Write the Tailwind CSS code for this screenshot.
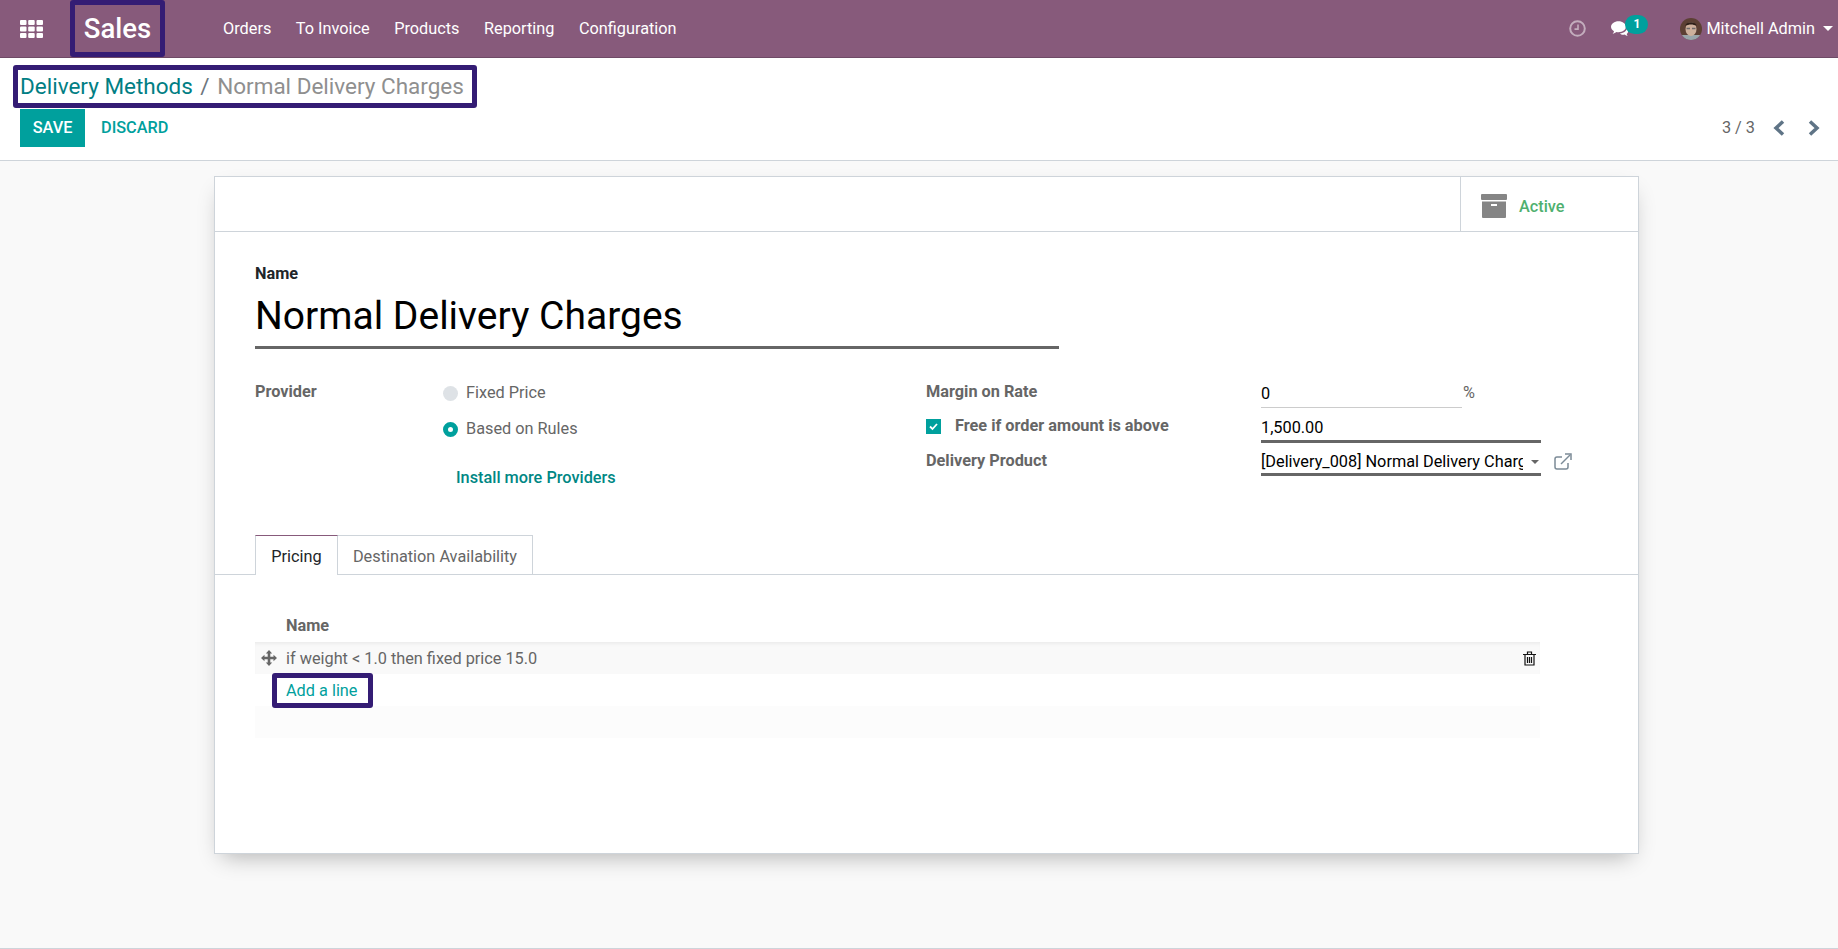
<!DOCTYPE html>
<html lang="en">
<head>
    <meta charset="UTF-8">
    <title>Delivery Methods - Sales</title>
    <script src="https://cdn.jsdelivr.net/npm/@tailwindcss/browser@4"></script>
</head>
<body class="bg-[#f9f9f9] font-['Roboto',sans-serif] text-[16.3px] text-[#666666]">
<div class="h-[949px] flex flex-col overflow-hidden">
    <!-- Navbar -->
    <header class="h-[58px] shrink-0 bg-[#875a7b] border-b border-[#6f4a66] flex items-center text-white">
        <svg class="ml-[20px] w-[23px] h-[18px] shrink-0" viewBox="0 0 23 18" fill="#fff">
            <rect x="0" y="0" width="6.5" height="5" rx="1"/><rect x="8.2" y="0" width="6.5" height="5" rx="1"/><rect x="16.5" y="0" width="6.5" height="5" rx="1"/>
            <rect x="0" y="6.5" width="6.5" height="5" rx="1"/><rect x="8.2" y="6.5" width="6.5" height="5" rx="1"/><rect x="16.5" y="6.5" width="6.5" height="5" rx="1"/>
            <rect x="0" y="13" width="6.5" height="5" rx="1"/><rect x="8.2" y="13" width="6.5" height="5" rx="1"/><rect x="16.5" y="13" width="6.5" height="5" rx="1"/>
        </svg>
        <div class="ml-[27px] w-[95px] h-[57px] border-[5px] border-[#341c74] rounded-[3px] flex items-center justify-center text-[27.5px] font-medium">Sales</div>
        <nav class="ml-[58px] pt-px flex gap-[24.5px]">
            <span>Orders</span><span>To Invoice</span><span>Products</span><span>Reporting</span><span>Configuration</span>
        </nav>
        <div class="ml-auto flex items-center">
            <svg class="w-[17px] h-[17px] opacity-50" viewBox="0 0 17 17" fill="none" stroke="#fff" stroke-width="2"><circle cx="8.5" cy="8.5" r="7.3"/><path d="M9 4.5v4.6H5.5" stroke-width="1.6"/></svg>
            <div class="relative ml-[25px] w-[37px] h-[22px]">
                <svg class="absolute left-0 top-[3px] w-[19px] h-[16px]" viewBox="0 0 19 16" fill="#fff"><path d="M7.5 0.2C3.4 0.2 0 2.700 0 5.800c0 1.800 1.100 3.400 3 4.400-.2 1-.8 1.900-1.400 2.500 1.500-.2 2.900-.9 3.900-1.700.6.1 1.300.2 2 .2 4.100 0 7.500-2.400 7.500-5.400S11.600 0.200 7.500 0.200z"/><path d="M16.200 5.200c.1.300.1.700.1 1 0 3.300-3.300 5.900-7.400 6.200.8.800 2 1.300 3.300 1.300.5 0 1-.1 1.500-.2.8.700 1.900 1.300 3.100 1.500-.5-.5-.9-1.300-1.100-2.100 1.100-.8 1.800-2 1.800-3.300 0-1.700-.9-3.200-2.300-4.400z"/></svg>
                <span class="absolute left-[14px] -top-[3px] w-[23px] h-[19px] rounded-full bg-[#00a09d] text-[12px] font-bold flex items-center justify-center">1</span>
            </div>
            <svg class="ml-[32px] w-[22px] h-[22px] rounded-full" viewBox="0 0 22 22"><rect width="22" height="22" fill="#5c4034"/><rect y="17" width="22" height="5" fill="#9aa6ab"/><ellipse cx="11" cy="11" rx="5.500" ry="7" fill="#cdb09c"/><path d="M5.500 8c0-5 11-5 11 0-3-2-8-2-11 0z" fill="#2e2019"/><path d="M6.500 10.500h3.500M12 10.500h3.500" stroke="#6e6a6a" stroke-width="1.500"/></svg>
            <span class="ml-[4px] pt-px">Mitchell Admin</span>
            <span class="ml-[8px] mr-[5px] w-0 h-0 border-x-[5px] border-x-transparent border-t-[5px] border-t-white"></span>
        </div>
    </header>

    <!-- Control panel -->
    <section class="h-[103px] shrink-0 bg-white border-b border-[#ced4da]">
        <div class="ml-[13px] mt-[7px] w-[464px] h-[43px] border-[5px] border-[#341c74] rounded-[3px] flex items-center pl-[2px] text-[22.5px] whitespace-nowrap">
            <span class="text-[#017e84]">Delivery Methods</span>
            <span class="mx-[7.5px] text-[#6c757d]">/</span>
            <span class="text-[#8f8f8f]">Normal Delivery Charges</span>
        </div>
        <div class="mt-px flex items-center pl-[20px] pr-[18px]">
            <span class="w-[65px] h-[38px] bg-[#00a09d] text-white font-medium flex items-center justify-center">SAVE</span>
            <span class="ml-[16px] text-[#00a09d] font-medium">DISCARD</span>
            <span class="ml-auto text-[#666666]">3 / 3</span>
            <svg class="ml-[18px] w-[12px] h-[16px]" viewBox="0 0 12 16" fill="none" stroke="#5f7486" stroke-width="3.500"><path d="M10 1.500 3 8l7 6.500"/></svg>
            <svg class="ml-[23px] w-[12px] h-[16px]" viewBox="0 0 12 16" fill="none" stroke="#5f7486" stroke-width="3.500"><path d="M2 1.500 9 8l-7 6.500"/></svg>
        </div>
    </section>

    <!-- Form sheet -->
    <main class="mt-[15px] ml-[214px] w-[1425px] h-[678px] shrink-0 bg-white border border-[#ced4da] shadow-[0_10px_22px_-8px_rgba(0,0,0,0.3)]">
        <div class="h-[55px] border-b border-[#ced4da] flex justify-end">
            <div class="w-[178px] border-l border-[#ced4da] flex items-center pl-[20px] pt-[4px]">
                <svg class="w-[26px] h-[24px]" viewBox="0 0 26 24" fill="#858585"><rect x="0" y="0" width="26" height="6" rx="1"/><path d="M1 7.500h24V23a1 1 0 0 1-1 1H2a1 1 0 0 1-1-1z"/><rect x="10" y="10" width="6" height="2" fill="#fff"/></svg>
                <span class="ml-[12px] mt-[2px] text-[#4fb06f] font-medium">Active</span>
            </div>
        </div>

        <div class="pl-[40px]">
            <div class="mt-[32px] h-[20px] leading-[20px] font-bold text-[#212529]">Name</div>
            <div class="w-[804px] h-[65px] border-b-[3px] border-[#666666] text-[39px] text-black leading-[64px]">Normal Delivery Charges</div>

            <div class="mt-[31px] h-[109px] flex">
                <div class="w-[671px] flex">
                    <div class="w-[187px] h-[24px] leading-[24px] font-bold">Provider</div>
                    <div class="pt-px">
                        <div class="h-[24px] flex items-center gap-[8px] pl-px">
                            <span class="w-[15px] h-[15px] rounded-full bg-[#dee2e6]"></span>
                            <span>Fixed Price</span>
                        </div>
                        <div class="mt-[12px] h-[24px] flex items-center gap-[8px] pl-px">
                            <span class="w-[15px] h-[15px] rounded-full border-[5px] border-[#00a09d] bg-white"></span>
                            <span>Based on Rules</span>
                        </div>
                        <div class="mt-[25px] h-[24px] leading-[24px] ml-[14px] font-medium text-[#008784]">Install more Providers</div>
                    </div>
                </div>
                <div>
                    <div class="h-[28px] flex">
                        <div class="w-[335px] h-[24px] leading-[24px] font-bold">Margin on Rate</div>
                        <div class="w-[201px] border-b border-[#cccccc] leading-[28px] text-black">0</div>
                        <span class="ml-[1px] h-[26px] leading-[26px]">%</span>
                    </div>
                    <div class="h-[35px] flex">
                        <div class="w-[335px] flex items-center h-[36px]">
                            <span class="w-[15px] h-[15px] bg-[#00a09d] flex items-center justify-center">
                                <svg class="w-[9px] h-[9px]" viewBox="0 0 9 9" fill="none" stroke="#fff" stroke-width="1.800"><path d="M1 4.500 3.500 7 8 2"/></svg>
                            </span>
                            <span class="ml-[14px] font-bold">Free if order amount is above</span>
                        </div>
                        <div class="w-[280px] border-b-[3px] border-[#666666] pt-[7px] leading-[26px] text-black">1,500.00</div>
                    </div>
                    <div class="h-[33px] flex">
                        <div class="w-[335px] h-[36px] leading-[36px] font-bold">Delivery Product</div>
                        <div class="w-[280px] border-b-[3px] border-[#666666] flex items-center pt-[8px] text-black">
                            <span class="w-[262px] overflow-hidden whitespace-nowrap">[Delivery_008] Normal Delivery Charges</span>
                            <span class="ml-[8px] w-0 h-0 border-x-[4px] border-x-transparent border-t-[4px] border-t-[#666666]"></span>
                        </div>
                        <svg class="ml-[13px] mt-[10px] w-[18px] h-[17px]" viewBox="0 0 18 17" fill="none" stroke="#7c8b97" stroke-width="1.500"><path d="M14 10v4a2 2 0 0 1-2 2H3a2 2 0 0 1-2-2V6a2 2 0 0 1 2-2h5"/><path d="M7 11 16 2"/><path d="M11 1h6v6" stroke-width="1.500"/></svg>
                    </div>
                </div>
            </div>
        </div>

        <!-- Tabs -->
        <div class="mt-[46px] h-[40px] border-b border-[#ced4da] flex pl-[40px]">
            <div class="w-[83px] h-[40px] bg-white border-x border-[#ced4da] border-t border-t-[#875a7b] text-[#212529] flex items-center justify-center pt-[4px]">Pricing</div>
            <div class="w-[195px] h-[39px] border-r border-t border-[#ced4da] flex items-center justify-center pt-[4px]">Destination Availability</div>
        </div>

        <div class="ml-[40px] w-[1285px]">
            <div class="mt-[41px] h-[20px] leading-[20px] pl-[31px] font-bold">Name</div>
            <div class="mt-[6px] h-[32px] bg-[#f9f9f9] shadow-[inset_0_4px_4px_-3px_rgba(0,0,0,0.08)] flex items-center">
                <svg class="ml-[6px] w-[16px] h-[16px]" viewBox="0 0 16 16" fill="#666666"><path d="M8 0 4.800 3.500H6.700V6.700H3.500V4.800L0 8l3.500 3.200V9.300h3.200v3.200H4.800L8 16l3.200-3.500H9.300V9.300h3.200v1.900L16 8l-3.500-3.200v1.900H9.300V3.500h1.900z"/></svg>
                <span class="ml-[9px] pt-[2px]">if weight &lt; 1.0 then fixed price 15.0</span>
                <svg class="ml-auto mr-[4px] w-[13px] h-[15px]" viewBox="0 0 13 15" fill="none" stroke="#111" stroke-width="1.200"><path d="M0 3.500h13M2 3.500V14h9V3.500M4.500 3.500V1h4v2.500M4.500 6v6M6.500 6v6M8.500 6v6"/></svg>
            </div>
            <div class="h-[33px]">
                <div class="relative ml-[17px] -mt-px w-[101px] h-[35px] bg-white border-[5px] border-[#341c74] rounded-[3px] flex items-center pl-[9px] pt-[2px] text-[#00a09d]">Add a line</div>
            </div>
            <div class="h-[32px] bg-[#fcfcfc]"></div>
        </div>
    </main>

    <div class="mt-auto h-px bg-[#ced4da]"></div>
</div>
</body>
</html>
